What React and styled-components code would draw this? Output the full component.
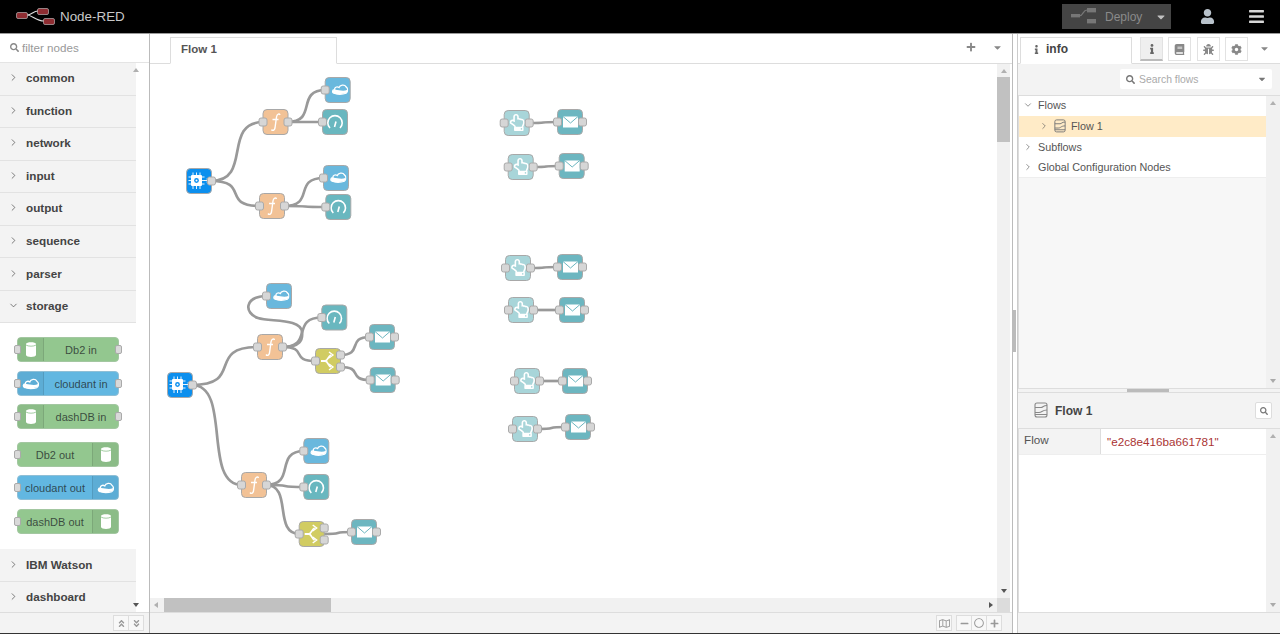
import styled, { createGlobalStyle } from 'styled-components';
import { ChevronRight, ChevronDown } from 'lucide-react';
import {
  FaUser,
  FaBars,
  FaCog,
  FaBug,
  FaBook,
  FaInfo,
  FaSearch,
  FaPlus,
  FaMinus,
  FaCaretDown,
  FaRegMap,
  FaRegCircle,
  FaAngleDoubleUp,
  FaAngleDoubleDown,
  FaRegHandPointUp,
} from 'react-icons/fa';

const GlobalStyle = createGlobalStyle`
  html, body { margin: 0; padding: 0; height: 100%; overflow: hidden; background: #fff; }
  * { box-sizing: border-box; }
  body { font-family: "Liberation Sans", Arial, sans-serif; color: #333; }
`;

const Page = styled.div`
  width: 1280px;
  height: 634px;
  display: flex;
  flex-direction: column;
  border-bottom: 1px solid #333;
`;

const Header = styled.header`
  height: 34px;
  flex: none;
  background: #000;
  border-bottom: 1px solid #9a9a9a;
  display: flex;
  align-items: center;
  padding-left: 16px;
  color: #c8c8c8;
`;

const Brand = styled.div`
  display: flex;
  align-items: center;
  gap: 4px;
  font-size: 13.4px;
  flex: 1;
`;

const DeployButton = styled.div`
  width: 109px;
  height: 25px;
  background: #444;
  display: flex;
  align-items: center;
  padding-left: 9px;
  color: #8a8a8a;
  font-size: 12px;
  margin-right: 25px;
`;

const DeployLabel = styled.span`
  margin-left: 9px;
  flex: 1;
`;

const DeployCaret = styled.span`
  width: 16px;
  display: flex;
  color: #c0c0c0;
`;

const HeaderIcon = styled.div`
  width: 22px;
  display: flex;
  justify-content: center;
  color: ${(p) => p.$color};
  margin-right: ${(p) => p.$gap}px;
`;

const Main = styled.div`
  flex: 1;
  min-height: 0;
  display: flex;
`;

const Palette = styled.aside`
  width: 150px;
  flex: none;
  display: flex;
  flex-direction: column;
  border-right: 1px solid #bbb;
  background: #fff;
`;

const FilterRow = styled.div`
  height: 29px;
  flex: none;
  display: flex;
  align-items: center;
  gap: 3px;
  padding: 0 0 1px 10px;
  border-bottom: 1px solid #e4e4e4;
  color: #999;
  font-size: 11.6px;
`;

const PaletteBody = styled.div`
  flex: 1;
  min-height: 0;
  display: flex;
`;

const CategoryList = styled.div`
  width: 136px;
  flex: none;
`;

const CategoryHeader = styled.div`
  height: 32.55px;
  background: #f3f3f3;
  border-bottom: 1px solid #e2e2e2;
  display: flex;
  align-items: center;
  padding: 0 0 2px 8px;
  gap: 7px;
  font-size: 11.7px;
  font-weight: bold;
  color: #444;
`;

const CategoryContent = styled.div`
  height: 226px;
  padding: 14px 0 0 17px;
  background: #fff;
`;

const PaletteNode = styled.div`
  position: relative;
  width: 102px;
  height: 25px;
  margin-bottom: ${(p) => p.$gap}px;
  border-radius: 4px;
  background: ${(p) => p.$color};
  border: 1px solid ${(p) => p.$edge};
  display: flex;
  flex-direction: ${(p) => (p.$out ? 'row-reverse' : 'row')};
  align-items: stretch;
  color: rgba(30, 40, 40, 0.78);
  font-size: 11px;
`;

const PaletteIcon = styled.div`
  width: 26px;
  flex: none;
  background: rgba(0, 0, 0, 0.05);
  border-${(p) => (p.$out ? 'left' : 'right')}: 1px solid rgba(0, 0, 0, 0.1);
  display: flex;
  align-items: center;
  justify-content: center;
`;

const PaletteLabel = styled.div`
  flex: 1;
  display: flex;
  align-items: center;
  justify-content: center;
  white-space: nowrap;
`;

const PalettePort = styled.span`
  position: absolute;
  top: 7px;
  ${(p) => p.$side}: -4px;
  width: 7px;
  height: 9px;
  background: #d9d9d9;
  border: 1px solid #aaa;
  border-radius: 2px;
`;

const Footer = styled.div`
  height: 21px;
  flex: none;
  background: #f3f3f3;
  border-top: 1px solid #ddd;
  display: flex;
  align-items: center;
  justify-content: flex-end;
  padding-right: ${(p) => p.$pad}px;
  gap: 5px;
`;

const ButtonGroup = styled.div`
  display: flex;
`;

const FooterButton = styled.div`
  width: ${(p) => p.$w}px;
  height: 16px;
  background: #f8f8f8;
  border: 1px solid #ddd;
  margin-left: -1px;
  display: flex;
  align-items: center;
  justify-content: center;
  color: #999;
`;

const Workspace = styled.section`
  width: 862px;
  flex: none;
  display: flex;
  flex-direction: column;
`;

const TabBar = styled.div`
  height: 30px;
  flex: none;
  display: flex;
  align-items: flex-end;
  background: #fff;
  border-bottom: 1px solid #ddd;
  padding-left: 20px;
`;

const Tab = styled.div`
  width: ${(p) => p.$w}px;
  height: 27px;
  margin-bottom: -1px;
  background: #fff;
  border: 1px solid #ddd;
  border-bottom: 1px solid #fff;
  display: flex;
  align-items: center;
  gap: 5px;
  padding: 0 0 3px ${(p) => p.$pad}px;
  font-size: 11.5px;
  font-weight: bold;
  color: #555;
`;

const TabText = styled.span`
  color: #444;
  font-size: 12px;
`;

const TabActions = styled.div`
  margin-left: auto;
  align-self: center;
  display: flex;
  align-items: center;
  color: #888;
  gap: 16px;
  padding: 0 9px 3px 0;
`;

const CanvasArea = styled.div`
  flex: 1;
  min-height: 0;
  display: grid;
  grid-template-columns: 847px 13px 2px;
  grid-template-rows: 534px 14px;
`;

const Track = styled.div`
  background: #f1f1f1;
  display: flex;
  flex-direction: ${(p) => (p.$horizontal ? 'row' : 'column')};
  align-items: center;
  ${(p) => (p.$horizontal ? 'padding-left: 14px;' : 'padding-top: 13px;')}
  position: relative;
`;

const SideTrack = styled(Track)`
  width: 14px;
  flex: none;
`;

const Thumb = styled.div`
  background: #c1c1c1;
  ${(p) =>
    p.$horizontal
      ? `width: ${p.$size}px; height: 100%;`
      : `height: ${p.$size}px; width: 100%;`}
`;

const Arrow = styled.span`
  position: absolute;
  width: 0;
  height: 0;
  ${(p) => (p.$dir === 'up' || p.$dir === 'down' ? 'left: 50%; margin-left: -3px;' : 'top: 50%; margin-top: -3px;')}
  ${(p) => p.$dir === 'up' && `top: 5px; border: 3px solid transparent; border-top: 0; border-bottom: 4px solid ${p.$c || '#b0b0b0'};`}
  ${(p) => p.$dir === 'down' && `bottom: 5px; border: 3px solid transparent; border-bottom: 0; border-top: 4px solid ${p.$c || '#555'};`}
  ${(p) => p.$dir === 'left' && 'left: 4px; border: 3px solid transparent; border-left: 0; border-right: 4px solid #b0b0b0;'}
  ${(p) => p.$dir === 'right' && 'right: 4px; border: 3px solid transparent; border-right: 0; border-left: 4px solid #555;'}
`;

const Corner = styled.div`
  background: #dcdcdc;
`;

const Canvas = styled.svg`
  display: block;
  width: 847px;
  height: 534px;
  background: #fff;
`;

const Separator = styled.div`
  width: 6px;
  flex: none;
  background: #fff;
  border-left: 1px solid #bbb;
  border-right: 1px solid #ccc;
  display: flex;
  align-items: center;
  padding: 0 0 5px 0;
`;

const Grip = styled.div`
  width: 3px;
  height: 42px;
  background: #bbb;
`;

const Sidebar = styled.aside`
  flex: 1;
  min-width: 0;
  display: flex;
  flex-direction: column;
  background: #fff;
`;

const SideTabs = styled.div`
  height: 30px;
  flex: none;
  display: flex;
  align-items: flex-end;
  border-bottom: 1px solid #ddd;
  padding-left: 2px;
`;

const SideTabIcons = styled.div`
  display: flex;
  align-self: flex-start;
  gap: 5.3px;
  margin: 3px 0 0 8px;
`;

const SideIconButton = styled.div`
  width: 23px;
  height: 24px;
  display: flex;
  align-items: center;
  justify-content: center;
  color: ${(p) => (p.$active ? '#666' : '#888')};
  background: ${(p) => (p.$active ? '#efefef' : '#fff')};
  border: 1px solid #e2e2e2;
  border-bottom: ${(p) => (p.$active ? '2px solid #bbb' : '1px solid #e2e2e2')};
`;

const SideCaret = styled.div`
  margin: 6px 0 0 11px;
  align-self: flex-start;
  color: #888;
`;

const SearchRow = styled.div`
  height: 32px;
  flex: none;
  background: #f3f3f3;
  border-bottom: 1px solid #ddd;
  display: flex;
  justify-content: flex-end;
  align-items: center;
  padding: 0 8px 1px 0;
`;

const SearchBox = styled.div`
  width: 152px;
  height: 20px;
  background: #fff;
  border-radius: 2px;
  display: flex;
  align-items: center;
  gap: 4px;
  padding: 0 5px 0 6px;
  color: #aaa;
  font-size: 10.4px;
  & > span { flex: 1; }
`;

const SideSplit = styled.div`
  display: flex;
  flex: ${(p) => (p.$fixed ? 'none' : '1')};
  height: ${(p) => (p.$fixed ? `${p.$fixed}px` : 'auto')};
  min-height: 0;
`;

const TreeArea = styled.div`
  flex: 1;
  min-width: 0;
  background: #f7f7f7;
  font-size: 10.8px;
  color: #555;
  border-left: 1px solid #ddd;
`;

const TreeList = styled.div`
  background: #fff;
  border-bottom: 1px solid #eee;
`;

const TreeRow = styled.div`
  height: ${(p) => p.$h}px;
  display: flex;
  align-items: center;
  gap: ${(p) => (p.$child ? 5 : 3)}px;
  padding: 0 0 ${(p) => p.$lift || 1}px ${(p) => (p.$child ? 20 : 4)}px;
  background: ${(p) => (p.$selected ? '#ffebc7' : 'transparent')};
`;

const TreeLabel = styled.span`
  margin-left: ${(p) => p.$indent || 0}px;
`;

const InfoSplit = styled.div`
  height: 5px;
  flex: none;
  background: #f3f3f3;
  border-top: 1px solid #ddd;
  border-bottom: 1px solid #ddd;
  display: flex;
  justify-content: center;
  padding-right: 2px;
`;

const InfoGrip = styled.div`
  width: 42px;
  height: 3px;
  background: #bbb;
`;

const InfoHeader = styled.div`
  height: 36px;
  flex: none;
  background: #f3f3f3;
  border-bottom: 1px solid #ddd;
  display: flex;
  align-items: center;
  gap: 7px;
  padding: 0 8px 0 16px;
  font-size: 12px;
  font-weight: bold;
  color: #444;
`;

const InfoSearch = styled.div`
  margin-left: auto;
  width: 17px;
  height: 17px;
  background: #fff;
  border: 1px solid #ddd;
  border-radius: 2px;
  color: #777;
  display: flex;
  align-items: center;
  justify-content: center;
`;

const InfoRow = styled.div`
  height: 26px;
  display: flex;
  border-bottom: 1px solid #eee;
  font-size: 11.7px;
`;

const InfoKey = styled.div`
  width: 82px;
  background: #f3f3f3;
  border-right: 1px solid #ddd;
  padding: 4px 0 0 5px;
  color: #555;
`;

const InfoValue = styled.div`
  padding: 6px 0 0 6px;
  color: #a33;
`;

const InfoTable = styled.div`
  flex: 1;
  min-width: 0;
  background: #fff;
  border-left: 1px solid #ddd;
`;

// wires and nodes use page coordinates, see the viewBox of the canvas
const nodes = [
  { type: 'inject', x: 199, y: 181 },
  { type: 'fn', x: 275.5, y: 122 },
  { type: 'cloud', x: 337.7, y: 90 },
  { type: 'gauge', x: 335, y: 122 },
  { type: 'fn', x: 272, y: 206 },
  { type: 'cloud', x: 336, y: 178 },
  { type: 'gauge', x: 338.3, y: 207 },

  { type: 'inject', x: 180, y: 385 },
  { type: 'fn', x: 270, y: 347 },
  { type: 'cloud', x: 279, y: 296 },
  { type: 'gauge', x: 334.3, y: 317.5 },
  { type: 'switch', x: 328, y: 361 },
  { type: 'mail', x: 382, y: 337 },
  { type: 'mail', x: 382.7, y: 380 },
  { type: 'fn', x: 254, y: 485 },
  { type: 'cloud', x: 316.3, y: 451 },
  { type: 'gauge', x: 316.3, y: 487 },
  { type: 'switch', x: 311.7, y: 534 },
  { type: 'mail', x: 364, y: 532 },

  { type: 'touch', x: 516.7, y: 123 },
  { type: 'mail', x: 570, y: 122 },
  { type: 'touch', x: 520.7, y: 167 },
  { type: 'mail', x: 571.7, y: 166 },
  { type: 'touch', x: 518, y: 268 },
  { type: 'mail', x: 570, y: 267 },
  { type: 'touch', x: 521, y: 310 },
  { type: 'mail', x: 572, y: 310 },
  { type: 'touch', x: 527, y: 381 },
  { type: 'mail', x: 575, y: 381 },
  { type: 'touch', x: 525, y: 429 },
  { type: 'mail', x: 578, y: 427 },
];

// from, to, vertical offset of the output port
const wires = [
  [0, 1], [0, 4], [1, 2], [1, 3], [4, 5], [4, 6],
  [7, 8], [7, 14], [8, 10], [8, 11], [11, 12, -6], [11, 13, 6],
  [14, 15], [14, 16], [14, 17], [17, 18],
  [19, 20], [21, 22], [23, 24], [25, 26], [27, 28], [29, 30],
];

const nodeColors = {
  inject: '#0b8fee',
  fn: '#f2c296',
  cloud: '#69b8dd',
  gauge: '#69b7bf',
  mail: '#6cb6c0',
  switch: '#d1cc62',
  touch: '#a8d5d9',
};

const hasInput = (type) => type !== 'inject';
const hasOutput = (type) => type !== 'gauge' && type !== 'cloud';

function wirePath(from, to, offset = 0) {
  const x1 = from.x + 12;
  const x2 = to.x - 12;
  const y1 = from.y + offset;
  const s = Math.max(8, (x2 - x1) * 0.8);
  return `M${x1} ${y1} C${x1 + s} ${y1} ${x2 - s} ${to.y} ${x2} ${to.y}`;
}

const CLOUD_OUTLINE = 'M5 8 C4 5 8 3 11 5 C12 1 19 0 21 4 C24 6 24 11 21 13 C16 15 8 15 4 13 C1 12 1 8 5 8 Z';
const CLOUD_BAND = 'M2 9 C8 6 15 12 23 8 L22 12 C16 15 7 15 3 13 Z';

function CloudGlyph({ x, y, size = 17 }) {
  return (
    <svg x={x} y={y} width={size} height={size * 0.67} viewBox="0 0 24 16">
      <path d={CLOUD_OUTLINE} fill="none" stroke="#fff" strokeWidth="1.8" />
      <path d={CLOUD_BAND} fill="#fff" />
    </svg>
  );
}

function DbGlyph() {
  return (
    <svg width="12" height="17" viewBox="0 0 12 17">
      <path d="M1 3 C1 0.5 11 0.5 11 3 L11 14 C11 16.5 1 16.5 1 14 Z" fill="#fff" />
      <path d="M1 4 C3 5.6 9 5.6 11 4" fill="none" stroke="#8cc08c" strokeWidth="0.8" />
    </svg>
  );
}

function NodeGlyph({ type }) {
  if (type === 'fn') {
    return (
      <path
        d="M-4 7.5 C-3 9 -1 8.5 -0.5 6 L1 -5 C1.5 -8.5 4 -8.5 4.5 -7 M-3 -2.5 L3 -2.5"
        fill="none"
        stroke="#fff"
        strokeWidth="1.4"
      />
    );
  }
  if (type === 'cloud') return <CloudGlyph x={-6.5} y={-6} />;
  if (type === 'gauge') {
    return (
      <g fill="none" stroke="#fff" strokeWidth="1.6">
        <path d="M-5 6 A7.2 7.2 0 1 1 5 6" />
        <path d="M-0.5 5 L1 -0.5" />
      </g>
    );
  }
  if (type === 'mail') {
    return (
      <g>
        <rect x="-7" y="-5.5" width="15" height="11" fill="#fff" />
        <path d="M-7 -5.5 L0.5 1 L8 -5.5" fill="none" stroke={nodeColors.mail} strokeWidth="1" />
      </g>
    );
  }
  if (type === 'switch') {
    return (
      <g fill="none" stroke="#fff" strokeWidth="1.8">
        <path d="M-7 0 L-3 0 C0 0 0 -5 3 -6 M-3 0 C0 0 0 5 3 6" />
        <path d="M1 -9 L5 -6 L1 -3 M1 3 L5 6 L1 9" strokeWidth="1.4" />
      </g>
    );
  }
  if (type === 'touch') {
    return <FaRegHandPointUp x={-8} y={-9} size={17} color="#fff" />;
  }
  return (
    <g fill="#fff">
      <rect x="-8" y="-6" width="11" height="11" rx="1" />
      <path
        d="M-6 -8.5 V8 M-2.5 -8.5 V8 M1 -8.5 V8 M-10.5 -4 H5.5 M-10.5 -0.5 H5.5 M-10.5 3 H5.5"
        stroke="#fff"
        strokeWidth="0.9"
      />
      <circle cx="-2.5" cy="-0.5" r="2.4" fill={nodeColors.inject} />
      <circle cx="-2.5" cy="-0.5" r="1" fill="#fff" />
      <path d="M5 -0.5 H9 M7.5 -2 L9.5 -0.5 L7.5 1" stroke="#fff" fill="none" strokeWidth="0.9" />
    </g>
  );
}

function FlowNode({ type, x, y }) {
  return (
    <g transform={`translate(${x} ${y})`}>
      <rect x="-12.5" y="-12.5" width="25" height="25" rx="4" fill={nodeColors[type]} stroke="#a8a8a8" />
      <NodeGlyph type={type} />
      <g fill="#d6d6d6" stroke="#aaa">
        {hasInput(type) && <rect x="-16.5" y="-4" width="8" height="8" rx="2" />}
        {hasOutput(type) && type !== 'switch' && <rect x="8.5" y="-4" width="8" height="8" rx="2" />}
        {type === 'switch' && (
          <>
            <rect x="8.5" y="-10" width="8" height="8" rx="2" />
            <rect x="8.5" y="2" width="8" height="8" rx="2" />
          </>
        )}
      </g>
    </g>
  );
}

function Logo() {
  return (
    <svg width="40" height="18" viewBox="0 0 40 18">
      <path d="M11 7 C16 7 17 3 22 3 M11 7 C16 7 20 13 28 13" fill="none" stroke="#ddd" strokeWidth="1.2" />
      <rect x="0.5" y="4.5" width="11" height="6" rx="1.5" fill="#8f2d32" stroke="#ccc" strokeWidth="0.6" />
      <rect x="21.5" y="0.5" width="11" height="6" rx="1.5" fill="#8f2d32" stroke="#ccc" strokeWidth="0.6" />
      <rect x="27.5" y="10.5" width="11" height="6" rx="1.5" fill="#8f2d32" stroke="#ccc" strokeWidth="0.6" />
    </svg>
  );
}

function DeployIcon() {
  return (
    <svg width="25" height="17" viewBox="0 0 25 17">
      <rect x="0" y="6" width="9" height="3.4" fill="#777" />
      <rect x="16" y="0" width="9" height="4.4" fill="#777" />
      <rect x="16" y="11" width="9" height="4.4" fill="#777" />
      <path d="M9 7.6 C12 7.6 12 2 16 2" fill="none" stroke="#777" strokeWidth="1.2" />
    </svg>
  );
}

function FlowIcon({ color, size = 14 }) {
  return (
    <svg width={size} height={size * 1.15} viewBox="0 0 14 16">
      <g fill="none" stroke={color} strokeWidth="1.1">
        <rect x="1" y="1" width="12" height="14" rx="2" />
        <path d="M1 5.5 H7 C9 5.5 9 3.5 13 3.5 M1 10.5 H5 C8 10.5 8 8 13 8 M1 12.5 H13" />
      </g>
    </svg>
  );
}

const storageNodes = [
  { label: 'Db2 in', icon: 'db', gap: 9 },
  { label: 'cloudant in', icon: 'cloud', gap: 8 },
  { label: 'dashDB in', icon: 'db', gap: 13 },
  { label: 'Db2 out', icon: 'db', out: true, gap: 8 },
  { label: 'cloudant out', icon: 'cloud', out: true, gap: 9 },
  { label: 'dashDB out', icon: 'db', out: true, gap: 0 },
];

function StorageNode({ label, icon, out, gap }) {
  const isCloud = icon === 'cloud';
  return (
    <PaletteNode
      $out={out}
      $gap={gap}
      $color={isCloud ? '#62b7e1' : '#93c78f'}
      $edge={isCloud ? '#8fbfd6' : '#a3c7a1'}
    >
      <PalettePort $side="left" />
      {!out && <PalettePort $side="right" />}
      <PaletteIcon $out={out}>
        {isCloud ? (
          <svg width="17" height="12" viewBox="0 0 24 16">
            <path d={CLOUD_OUTLINE} fill="none" stroke="#fff" strokeWidth="1.8" />
            <path d={CLOUD_BAND} fill="#fff" />
          </svg>
        ) : (
          <DbGlyph />
        )}
      </PaletteIcon>
      <PaletteLabel>{label}</PaletteLabel>
    </PaletteNode>
  );
}

function Category({ name, open, children }) {
  return (
    <>
      <CategoryHeader>
        {open ? <ChevronDown size={11} strokeWidth={1.5} /> : <ChevronRight size={11} strokeWidth={1.5} />}
        {name}
      </CategoryHeader>
      {children}
    </>
  );
}

export default function App() {
  return (
    <Page>
      <GlobalStyle />
      <Header>
        <Brand>
          <Logo />
          Node-RED
        </Brand>
        <DeployButton>
          <DeployIcon />
          <DeployLabel>Deploy</DeployLabel>
          <DeployCaret>
            <FaCaretDown size={12} />
          </DeployCaret>
        </DeployButton>
        <HeaderIcon $color="#b9c3cc" $gap={27}>
          <FaUser size={15} />
        </HeaderIcon>
        <HeaderIcon $color="#d8d8d8" $gap={13}>
          <FaBars size={17} />
        </HeaderIcon>
      </Header>
      <Main>
        <Palette>
          <FilterRow>
            <FaSearch size={9} color="#888" />
            filter nodes
          </FilterRow>
          <PaletteBody>
            <CategoryList>
              {['common', 'function', 'network', 'input', 'output', 'sequence', 'parser'].map((name) => (
                <Category key={name} name={name} />
              ))}
              <Category name="storage" open>
                <CategoryContent>
                  {storageNodes.map((node) => (
                    <StorageNode key={node.label} {...node} />
                  ))}
                </CategoryContent>
              </Category>
              <Category name="IBM Watson" />
              <Category name="dashboard" />
            </CategoryList>
            <Track>
              <Arrow $dir="up" />
              <Thumb $size={520} />
              <Arrow $dir="down" />
            </Track>
          </PaletteBody>
          <Footer $pad={5}>
            <ButtonGroup>
              <FooterButton $w={16}>
                <FaAngleDoubleUp size={9} />
              </FooterButton>
              <FooterButton $w={16}>
                <FaAngleDoubleDown size={9} />
              </FooterButton>
            </ButtonGroup>
          </Footer>
        </Palette>
        <Workspace>
          <TabBar>
            <Tab $w={167} $pad={10}>
              Flow 1
            </Tab>
            <TabActions>
              <FaPlus size={10} />
              <FaCaretDown size={11} />
            </TabActions>
          </TabBar>
          <CanvasArea>
            <Canvas viewBox="150 64 847 534">
              <g fill="none" stroke="#999" strokeWidth="2.7">
                {wires.map(([a, b, offset]) => (
                  <path key={`${a}-${b}`} d={wirePath(nodes[a], nodes[b], offset)} />
                ))}
                <path d="M283 347 C300 347 303 340 302 332 C301 318 270 322 258 318 C244 313 244 297 266 296" />
              </g>
              {nodes.map((node) => (
                <FlowNode key={`${node.x}-${node.y}`} {...node} />
              ))}
            </Canvas>
            <Track>
              <Arrow $dir="up" />
              <Thumb $size={65} />
              <Arrow $dir="down" />
            </Track>
            <div />
            <Track $horizontal>
              <Arrow $dir="left" />
              <Thumb $horizontal $size={167} />
              <Arrow $dir="right" />
            </Track>
            <Corner />
          </CanvasArea>
          <Footer $pad={10}>
            <FooterButton $w={16}>
              <FaRegMap size={11} />
            </FooterButton>
            <ButtonGroup>
              <FooterButton $w={16}>
                <FaMinus size={9} />
              </FooterButton>
              <FooterButton $w={16}>
                <FaRegCircle size={10} />
              </FooterButton>
              <FooterButton $w={16}>
                <FaPlus size={9} />
              </FooterButton>
            </ButtonGroup>
          </Footer>
        </Workspace>
        <Separator>
          <Grip />
        </Separator>
        <Sidebar>
          <SideTabs>
            <Tab $w={112} $pad={11}>
              <FaInfo size={9} color="#666" />
              <TabText>info</TabText>
            </Tab>
            <SideTabIcons>
              <SideIconButton $active>
                <FaInfo size={10} />
              </SideIconButton>
              <SideIconButton>
                <FaBook size={11} />
              </SideIconButton>
              <SideIconButton>
                <FaBug size={11} />
              </SideIconButton>
              <SideIconButton>
                <FaCog size={11} />
              </SideIconButton>
            </SideTabIcons>
            <SideCaret>
              <FaCaretDown size={11} />
            </SideCaret>
          </SideTabs>
          <SearchRow>
            <SearchBox>
              <FaSearch size={9} color="#777" />
              <span>Search flows</span>
              <FaCaretDown size={10} color="#777" />
            </SearchBox>
          </SearchRow>
          <SideSplit>
            <TreeArea>
              <TreeList>
                <TreeRow $h={20} $lift={3}>
                  <ChevronDown size={10} strokeWidth={1.5} />
                  <TreeLabel $indent={2}>Flows</TreeLabel>
                </TreeRow>
                <TreeRow $h={21} $child $selected>
                  <ChevronRight size={10} strokeWidth={1.5} />
                  <FlowIcon color="#777" size={12} />
                  <TreeLabel>Flow 1</TreeLabel>
                </TreeRow>
                <TreeRow $h={20}>
                  <ChevronRight size={10} strokeWidth={1.5} />
                  <TreeLabel $indent={2}>Subflows</TreeLabel>
                </TreeRow>
                <TreeRow $h={20}>
                  <ChevronRight size={10} strokeWidth={1.5} />
                  <TreeLabel $indent={2}>Global Configuration Nodes</TreeLabel>
                </TreeRow>
              </TreeList>
            </TreeArea>
            <SideTrack>
              <Arrow $dir="up" />
              <Arrow $dir="down" $c="#aaa" />
            </SideTrack>
          </SideSplit>
          <InfoSplit>
            <InfoGrip />
          </InfoSplit>
          <InfoHeader>
            <FlowIcon color="#888" size={14} />
            Flow 1
            <InfoSearch>
              <FaSearch size={8} />
            </InfoSearch>
          </InfoHeader>
          <SideSplit $fixed={183}>
            <InfoTable>
              <InfoRow>
                <InfoKey>Flow</InfoKey>
                <InfoValue>"e2c8e416ba661781"</InfoValue>
              </InfoRow>
            </InfoTable>
            <SideTrack>
              <Arrow $dir="up" />
              <Arrow $dir="down" $c="#aaa" />
            </SideTrack>
          </SideSplit>
          <Footer $pad={0} />
        </Sidebar>
      </Main>
    </Page>
  );
}
